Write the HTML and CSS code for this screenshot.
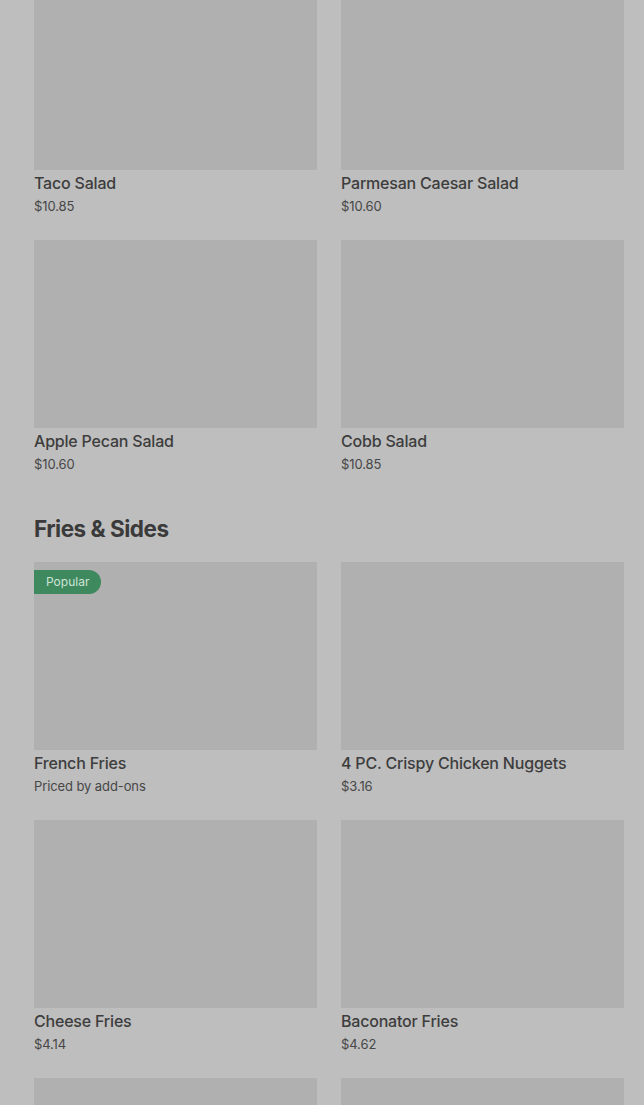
FILE: index.html
```html
<!DOCTYPE html>
<html lang="en">
<head>
  <meta charset="UTF-8">
  <title>Menu</title>
  <link rel="stylesheet" href="styles.css">
</head>
<body>
  <div class="menu">
    <div class="grid first">
      <div class="item">
        <div class="thumb"></div>
        <div class="name">Taco Salad</div>
        <div class="price">$10.85</div>
      </div>
      <div class="item">
        <div class="thumb"></div>
        <div class="name">Parmesan Caesar Salad</div>
        <div class="price">$10.60</div>
      </div>
      <div class="item">
        <div class="thumb"></div>
        <div class="name">Apple Pecan Salad</div>
        <div class="price">$10.60</div>
      </div>
      <div class="item">
        <div class="thumb"></div>
        <div class="name">Cobb Salad</div>
        <div class="price">$10.85</div>
      </div>
    </div>

    <h2 class="section-title">Fries &amp; Sides</h2>
    <div class="grid">
      <div class="item">
        <div class="thumb">
          <span class="badge">Popular</span>
        </div>
        <div class="name">French Fries</div>
        <div class="price">Priced by add-ons</div>
      </div>
      <div class="item">
        <div class="thumb"></div>
        <div class="name">4 PC. Crispy Chicken Nuggets</div>
        <div class="price">$3.16</div>
      </div>
      <div class="item">
        <div class="thumb"></div>
        <div class="name">Cheese Fries</div>
        <div class="price">$4.14</div>
      </div>
      <div class="item">
        <div class="thumb"></div>
        <div class="name">Baconator Fries</div>
        <div class="price">$4.62</div>
      </div>
      <div class="item">
        <div class="thumb"></div>
      </div>
      <div class="item">
        <div class="thumb"></div>
      </div>
    </div>
  </div>
</body>
</html>
```

FILE: styles.css
```css
body {
  margin: 0;
  background-color: #bebebe;
  color: #3d3d3d;
  font-family: Inter, "Noto Sans", sans-serif;
  overflow: hidden;
}
.menu {
  padding: 0 20px 0 34px;
  margin-top: -18px;
}
.grid {
  display: grid;
  grid-template-columns: 1fr 1fr;
  column-gap: 24px;
}
.item {
  margin-bottom: 24px;
}
.thumb {
  position: relative;
  height: 188px;
  background-color: #b0b0b0;
}
.name {
  margin-top: 3px;
  font-size: 16px;
  line-height: 20px;
  font-weight: 500;
  letter-spacing: -0.2px;
}
.price {
  margin-top: 3px;
  font-size: 13px;
  line-height: 20px;
  color: #474747;
  letter-spacing: -0.1px;
}
.section-title {
  margin: 15px 0 17px;
  font-size: 22.5px;
  line-height: 32px;
  font-weight: 700;
  letter-spacing: -0.5px;
  color: #3a3a3a;
}
.badge {
  position: absolute;
  top: 8px;
  left: 0;
  height: 24px;
  line-height: 24px;
  padding: 0 12px;
  font-size: 12px;
  color: #cfe3d6;
  background-color: #3e895e;
  border-radius: 0 12px 12px 0;
}
```
